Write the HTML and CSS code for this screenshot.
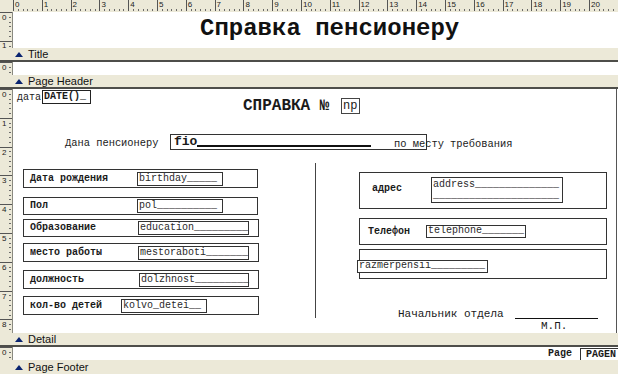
FILE: index.html
```
<!DOCTYPE html>
<html>
<head>
<meta charset="utf-8">
<link rel="stylesheet" href="styles.css">
</head>
<body>
<div class="designer">
  <div class="hruler">
    <div class="corner"></div>
    <div class="hscale">
      <span>0</span><span>1</span><span>2</span><span>3</span><span>4</span><span>5</span><span>6</span><span>7</span><span>8</span><span>9</span><span>10</span><span>11</span><span>12</span><span>13</span><span>14</span><span>15</span><span>16</span><span>17</span><span>18</span><span>19</span><span>20</span>
    </div>
  </div>

  <section class="band band-title">
    <div class="vruler"><span>0</span><span>1</span></div>
    <div class="canvas">
      <div class="obj title-text">Справка пенсионеру</div>
    </div>
  </section>
  <div class="bar"><span class="tri"></span>Title</div>

  <section class="band band-ph">
    <div class="vruler"><span>0</span></div>
    <div class="canvas"></div>
  </section>
  <div class="bar"><span class="tri"></span>Page Header</div>

  <section class="band band-detail">
    <div class="vruler"><span>0</span><span>1</span><span>2</span><span>3</span><span>4</span><span>5</span><span>6</span><span>7</span><span>8</span></div>
    <div class="canvas">
      <div class="obj date-label">дата</div>
      <div class="obj date-field">DATE()_</div>
      <div class="obj spravka">СПРАВКА №</div>
      <div class="obj np">np</div>
      <div class="obj dana">Дана пенсионеру</div>
      <div class="obj fio"><span class="fio-text">fio</span><span class="fio-line"></span></div>
      <div class="obj mesto">по месту требования</div>
      <div class="obj divider"></div>

      <div class="obj rowbox l1"><span class="lbl">Дата рождения</span><span class="fld w85">birthday_____</span></div>
      <div class="obj rowbox l2"><span class="lbl">Пол</span><span class="fld w85">pol__________</span></div>
      <div class="obj rowbox l3 wide"><span class="lbl">Образование</span><span class="fld w111">education_________</span></div>
      <div class="obj rowbox l4 wide"><span class="lbl">место работы</span><span class="fld w111">mestoraboti_______</span></div>
      <div class="obj rowbox l5 wide"><span class="lbl lbl-d">должность</span><span class="fld w110">dolzhnost_________</span></div>
      <div class="obj rowbox l6 wide"><span class="lbl lbl-s">кол-во детей</span><span class="fld w86">kolvo_detei__</span></div>

      <div class="obj rbox r1">
        <span class="rlbl r1lbl">адрес</span>
        <span class="fld addr">address______________<br>_____________________</span>
      </div>
      <div class="obj rbox r2">
        <span class="rlbl r2lbl">Телефон</span>
        <span class="fld tel">telephone_______</span>
      </div>
      <div class="obj rbox r3">
        <span class="fld razm">razmerpensii_________</span>
      </div>

      <div class="obj sig">Начальник отдела</div>
      <div class="obj sig-line"></div>
      <div class="obj mp">М.П.</div>
      <div class="obj page-edge"></div>
    </div>
  </section>
  <div class="bar"><span class="tri"></span>Detail</div>

  <section class="band band-pf">
    <div class="vruler"><span>0</span></div>
    <div class="canvas">
      <div class="obj page-lbl">Page</div>
      <div class="obj page-fld">PAGEN</div>
    </div>
  </section>
  <div class="bar"><span class="tri"></span>Page Footer</div>
</div>
</body>
</html>
```

FILE: styles.css
```
html, body {
  margin: 0;
  padding: 0;
}
body {
  width: 618px;
  height: 374px;
  overflow: hidden;
  background: #ffffff;
  font-family: "Liberation Mono", "Courier New", monospace;
  color: #1a1a1a;
}
.designer {
  display: flex;
  flex-direction: column;
  width: 618px;
}

/* top ruler */
.hruler {
  display: flex;
  height: 12px;
  background: #ece9d8;
  flex: none;
}
.corner {
  width: 13px;
  flex: none;
}
.hscale {
  display: flex;
  flex: 1;
  overflow: hidden;
  background-image: repeating-linear-gradient(90deg, #6a6a6a 0 1px, transparent 1px 4.8px);
  background-size: 100% 2px;
  background-position: 0 9px;
  background-repeat: no-repeat;
}
.hscale span {
  flex: none;
  width: 28.8px;
  box-sizing: border-box;
  height: 11px;
  border-left: 1px solid #555;
  padding-left: 1px;
  font: 8px/9px "Liberation Sans", Arial, sans-serif;
  color: #222;
}

/* bands */
.band {
  display: flex;
  flex: none;
  background: #fff;
}
.band-title { height: 36px; }
.band-ph { height: 13px; }
.band-detail { height: 244px; }
.band-pf { height: 13px; }

.vruler {
  width: 12px;
  flex: none;
  display: flex;
  flex-direction: column;
  background-color: #ece9d8;
  background-image: repeating-linear-gradient(180deg, #6a6a6a 0 1px, transparent 1px 4.8px);
  background-size: 2px 100%;
  background-position: 9px 0;
  background-repeat: no-repeat;
  border-right: 1px solid #8a8a80;
}
.vruler span {
  flex: none;
  height: 28.8px;
  box-sizing: border-box;
  border-top: 1px solid #555;
  padding-left: 2px;
  font: 8px/6px "Liberation Sans", Arial, sans-serif;
  padding-top: 2px;
  color: #222;
}
.band-title .vruler span:last-child {
  height: 6.2px;
  padding-top: 1px;
}
.band-ph .vruler span,
.band-pf .vruler span {
  height: 12px;
}

.canvas {
  position: relative;
  flex: 1;
  overflow: hidden;
}

/* band bars */
.bar {
  flex: none;
  height: 12px;
  background: #ece9d8;
  border-bottom: 2px solid #4e4e4a;
  display: flex;
  align-items: center;
  font: 11px/12px "Liberation Sans", Arial, sans-serif;
  color: #111;
  padding-left: 15px;
}
.bar:last-child {
  border-bottom: none;
  height: 14px;
}
.tri {
  width: 0;
  height: 0;
  border-left: 4px solid transparent;
  border-right: 4px solid transparent;
  border-bottom: 5px solid #0a2470;
  margin-right: 5px;
}

/* report objects on the designer canvas */
.obj {
  position: absolute;
  white-space: pre;
  box-sizing: border-box;
}
.title-text {
  left: 187px;
  top: 3px;
  font-weight: bold;
  font-size: 24px;
  line-height: 28px;
  color: #111;
}
.date-label {
  left: 4px;
  top: 2px;
  font-size: 10px;
  line-height: 14px;
}
.date-field {
  left: 29px;
  top: 1px;
  width: 49px;
  height: 14px;
  border: 1px solid #222;
  font-size: 10px;
  font-weight: bold;
  line-height: 12px;
  padding-left: 1px;
}
.spravka {
  left: 230px;
  top: 8px;
  font-size: 16px;
  font-weight: bold;
  line-height: 18px;
}
.np {
  left: 328px;
  top: 9px;
  width: 19px;
  height: 16px;
  border: 1px solid #444;
  font-size: 12px;
  line-height: 14px;
  padding-left: 1px;
}
.dana {
  left: 52px;
  top: 47px;
  font-size: 10.4px;
  line-height: 14px;
}
.fio {
  left: 157px;
  top: 45px;
  width: 257px;
  height: 16px;
  border: 1px solid #333;
  display: flex;
  align-items: flex-end;
  padding: 0 0 1px 3px;
}
.fio-text {
  font-size: 13px;
  font-weight: bold;
  line-height: 13px;
}
.fio-line {
  width: 174px;
  height: 2px;
  background: #111;
  margin-bottom: 1px;
}
.mesto {
  left: 381px;
  top: 48px;
  font-size: 10.4px;
  line-height: 14px;
}
.divider {
  left: 302px;
  top: 74px;
  height: 155px;
  border-left: 1px solid #444;
}
.page-edge {
  left: 603px;
  top: 0;
  height: 244px;
  border-left: 1px solid #555;
}

.rowbox {
  left: 10px;
  width: 235px;
  border: 1px solid #333;
  display: flex;
  align-items: center;
  padding-left: 6px;
}
.rowbox.wide { width: 236px; }
.l1 { top: 80px; height: 19px; }
.l2 { top: 108px; height: 18px; }
.l3 { top: 130px; height: 18px; }
.l4 { top: 154px; height: 19px; }
.l5 { top: 181px; height: 19px; }
.l6 { top: 207px; height: 19px; }
.lbl {
  flex: none;
  width: 107px;
  font-size: 10px;
  font-weight: bold;
  line-height: 12px;
}
.wide .lbl { width: 108px; }
.wide .lbl-d { width: 109px; }
.wide .lbl-s { width: 91px; }

.fld {
  flex: none;
  box-sizing: border-box;
  border: 1px solid #333;
  background: #fff;
  font-size: 10px;
  line-height: 11px;
  padding-left: 1px;
  color: #2a2a2a;
  white-space: pre;
}
.rowbox .fld { height: 14px; }
.w85 { width: 86px; }
.w110 { width: 110px; }
.w111 { width: 111px; }
.w86 { width: 86px; }

.rbox {
  left: 346px;
  width: 248px;
  border: 1px solid #333;
  display: flex;
}
.r1 { top: 83px; height: 37px; align-items: center; padding-left: 12px; }
.r2 { top: 129px; height: 27px; align-items: center; padding-left: 8px; }
.r3 { top: 160px; height: 30px; align-items: flex-start; padding: 10px 0 0 0; }
.rlbl {
  flex: none;
  font-size: 10px;
  font-weight: bold;
  line-height: 12px;
}
.r1lbl { width: 59px; margin-top: -3px; }
.r2lbl { width: 58px; }
.addr {
  width: 132px;
  height: 26px;
  align-self: flex-start;
  margin-top: 4px;
  line-height: 11px;
  padding-top: 1px;
}
.tel {
  width: 100px;
  height: 13px;
  line-height: 10px;
}
.razm {
  width: 131px;
  height: 13px;
  line-height: 10px;
  margin-left: -3px;
}

.sig {
  left: 385px;
  top: 219px;
  font-size: 11px;
  line-height: 13px;
}
.sig-line {
  left: 502px;
  top: 229px;
  width: 83px;
  border-top: 1px solid #111;
}
.mp {
  left: 528px;
  top: 231px;
  font-size: 11px;
  line-height: 13px;
}

.page-lbl {
  left: 535px;
  top: 1px;
  font-size: 10px;
  font-weight: bold;
  line-height: 12px;
}
.page-fld {
  left: 567px;
  top: 1px;
  width: 38px;
  height: 13px;
  border: 1px solid #333;
  border-right: none;
  font-size: 10px;
  font-weight: bold;
  line-height: 11px;
  padding-left: 5px;
}
```
